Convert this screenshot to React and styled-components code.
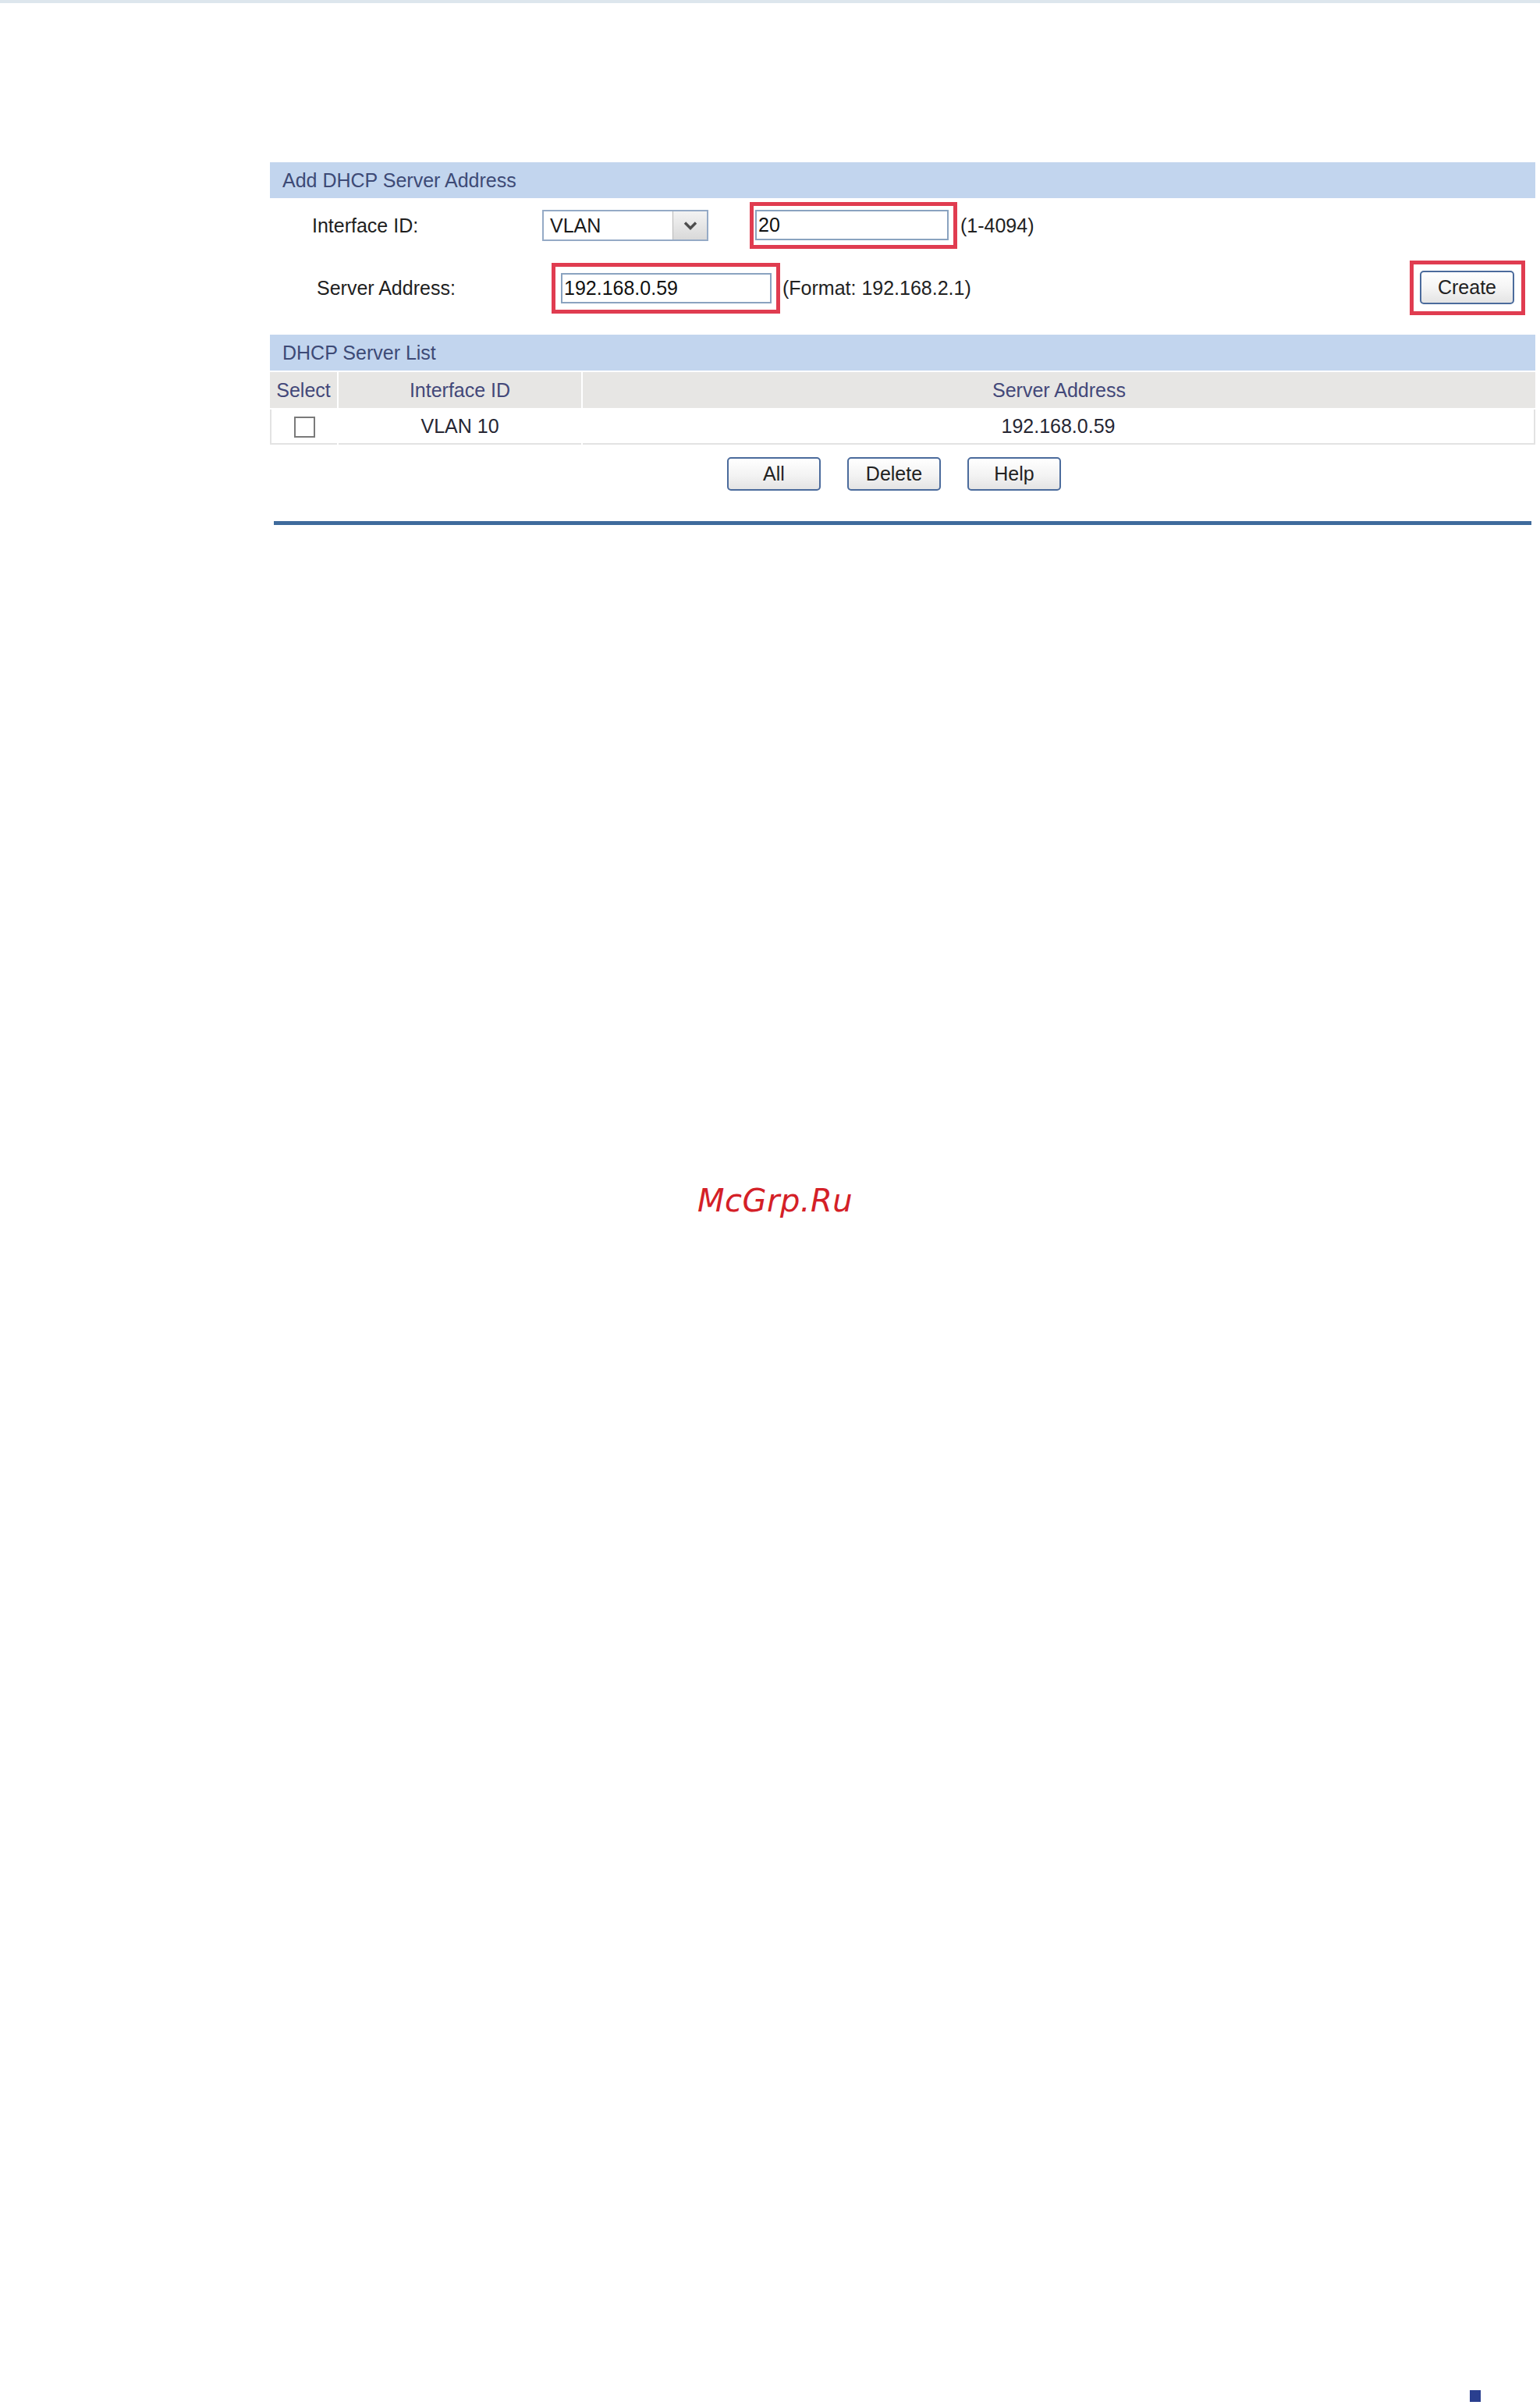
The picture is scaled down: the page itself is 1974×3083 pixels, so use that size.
import React from "react";
import styled, { createGlobalStyle } from "styled-components";

const Global = createGlobalStyle`
  html, body { margin: 0; padding: 0; background: #ffffff; }
  body { font-family: "Liberation Sans", Arial, sans-serif; }
  * { box-sizing: border-box; }
`;

const Page = styled.div`
  min-height: 3083px;
  width: 1974px;
  display: flex;
  flex-direction: column;
  background: #fff;
`;

const TopLine = styled.div`
  height: 4px;
  background: #dde6ed;
`;

const Panel = styled.div`
  margin: 204px 0 0 346px;
  width: 1622px;
  font-size: 25px;
  color: #1e1e1e;
`;

const SectionHeader = styled.div`
  height: 46px;
  display: flex;
  align-items: center;
  padding-left: 16px;
  background: #c2d5ee;
  color: #3d4a76;
  font-size: 25px;
`;

const FormArea = styled.div`
  display: flex;
  flex-direction: column;
  gap: 15px;
  padding: 5px 0 25px;
`;

const FormRow = styled.div`
  display: flex;
  align-items: center;
  height: ${(p) => p.$h}px;
`;

const Label = styled.span`
  margin-left: ${(p) => p.$indent}px;
  width: ${(p) => p.$w}px;
  flex: none;
  color: #1e1e1e;
`;

const SelectBox = styled.div`
  width: 213px;
  height: 40px;
  border: 2px solid #95aac6;
  display: flex;
  flex: none;
  background: #fff;
`;

const SelectValue = styled.span`
  flex: 1;
  display: flex;
  align-items: center;
  padding-left: 8px;
  color: #1a1a1a;
`;

const SelectButton = styled.span`
  width: 44px;
  display: flex;
  align-items: center;
  justify-content: center;
  background: linear-gradient(#f3f3f3, #d9d9d9);
  border-left: 1px solid #b9b9b9;
`;

const Highlight = styled.div`
  border: 5px solid #e03c50;
  padding: ${(p) => p.$pad};
  margin-left: ${(p) => p.$ml || 0}px;
  margin-right: ${(p) => p.$mr || 0}px;
  flex: none;
  display: flex;
`;

const TextInput = styled.div`
  width: ${(p) => p.$w}px;
  height: 39px;
  border: 2px solid #8aa3c0;
  display: flex;
  align-items: center;
  padding-left: 2px;
  background: #fff;
  color: #111;
`;

const Hint = styled.span`
  margin-left: ${(p) => p.$ml}px;
  color: #222;
  flex: none;
`;

const Spacer = styled.div`
  flex: 1;
`;

const Button = styled.button`
  width: ${(p) => p.$w || 120}px;
  height: 43px;
  border: 2px solid #4b6b9c;
  border-radius: 5px;
  background: linear-gradient(#ffffff 0%, #f3f3f3 55%, #e4e4e4 100%);
  font-family: "Liberation Sans", Arial, sans-serif;
  font-size: 25px;
  color: #222;
  padding: 0;
  display: flex;
  align-items: center;
  justify-content: center;
  cursor: pointer;
`;

const Table = styled.table`
  border-collapse: separate;
  border-spacing: 2px 2px;
  margin-left: -2px;
  width: calc(100% + 4px);
  table-layout: fixed;
`;

const Th = styled.th`
  height: 46px;
  background: #e7e6e4;
  color: #434879;
  font-weight: normal;
  font-size: 25px;
  text-align: center;
  padding: 0;
  width: ${(p) => (p.$w ? `${p.$w}px` : "auto")};
`;

const Td = styled.td`
  height: 45px;
  padding: 0;
  text-align: center;
  font-size: 25px;
  color: #262633;
  border-bottom: 2px solid #e3e3e3;
  border-left: ${(p) => (p.$first ? "2px solid #e3e3e3" : "none")};
  border-right: ${(p) => (p.$last ? "2px solid #e3e3e3" : "none")};
`;

const Checkbox = styled.span`
  display: inline-block;
  width: 27px;
  height: 27px;
  border: 2px solid #7a7a7a;
  background: #fff;
  vertical-align: middle;
`;

const ButtonBar = styled.div`
  display: flex;
  justify-content: center;
  gap: 34px;
  padding-right: 22px;
  margin-top: 14px;
`;

const Rule = styled.div`
  height: 5px;
  margin: 39px 5px 0;
  background: #3f6b9c;
`;

const Watermark = styled.div`
  margin: 842px 0 0 894px;
  font-family: "DejaVu Sans", Verdana, sans-serif;
  font-style: oblique;
  font-size: 40px;
  line-height: 48px;
  color: #d42027;
  letter-spacing: 0.5px;
`;

const Footer = styled.div`
  margin-top: auto;
  display: flex;
  justify-content: flex-end;
  padding: 0 76px 4px 0;
`;

const Marker = styled.span`
  width: 14px;
  height: 15px;
  background: #2a3f8f;
`;

function Chevron() {
  return (
    <svg width="18" height="12" viewBox="0 0 18 12">
      <path d="M2 2.5 L9 9.5 L16 2.5" fill="none" stroke="#4d4d4d" strokeWidth="3.4" />
    </svg>
  );
}

export default function App() {
  return (
    <Page>
      <Global />
      <TopLine />
      <Panel>
        <SectionHeader>Add DHCP Server Address</SectionHeader>
        <FormArea>
          <FormRow $h={60}>
            <Label $indent={54} $w={295}>Interface ID:</Label>
            <SelectBox>
              <SelectValue>VLAN</SelectValue>
              <SelectButton>
                <Chevron />
              </SelectButton>
            </SelectBox>
            <Highlight $pad="5px 6px 6px 2px" $ml={53}>
              <TextInput $w={248}>20</TextInput>
            </Highlight>
            <Hint $ml={4}>(1-4094)</Hint>
          </FormRow>
          <FormRow $h={70}>
            <Label $indent={60} $w={301}>Server Address:</Label>
            <Highlight $pad="8px 6px 8px 7px">
              <TextInput $w={270}>192.168.0.59</TextInput>
            </Highlight>
            <Hint $ml={3}>(Format: 192.168.2.1)</Hint>
            <Spacer />
            <Highlight $pad="8px 9px 9px 8px" $mr={13}>
              <Button $w={121}>Create</Button>
            </Highlight>
          </FormRow>
        </FormArea>
        <SectionHeader>DHCP Server List</SectionHeader>
        <Table>
          <thead>
            <tr>
              <Th $w={86}>Select</Th>
              <Th $w={311}>Interface ID</Th>
              <Th>Server Address</Th>
            </tr>
          </thead>
          <tbody>
            <tr>
              <Td $first>
                <Checkbox />
              </Td>
              <Td>VLAN 10</Td>
              <Td $last>192.168.0.59</Td>
            </tr>
          </tbody>
        </Table>
        <ButtonBar>
          <Button $w={120}>All</Button>
          <Button $w={120}>Delete</Button>
          <Button $w={120}>Help</Button>
        </ButtonBar>
        <Rule />
      </Panel>
      <Watermark>McGrp.Ru</Watermark>
      <Footer>
        <Marker />
      </Footer>
    </Page>
  );
}
